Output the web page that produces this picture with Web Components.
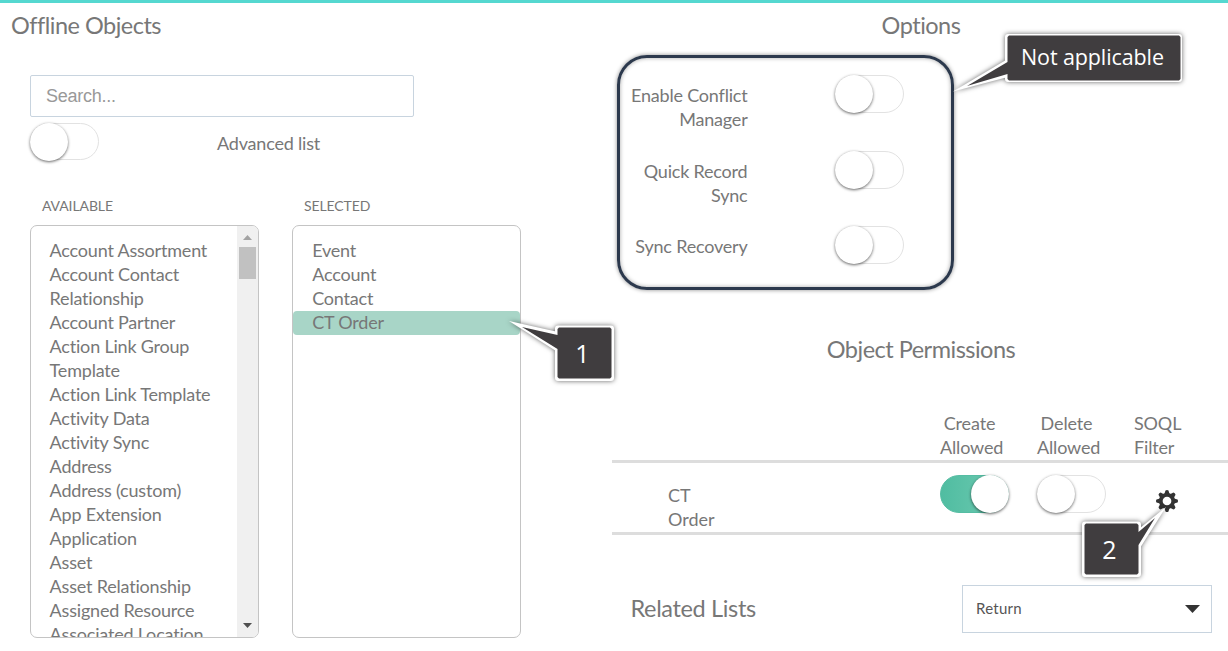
<!DOCTYPE html>
<html lang="en">
<head>
<meta charset="utf-8">
<title>Offline Objects</title>
<style>
html,body{margin:0;height:100%;overflow:hidden;background:#fff}
body{font:18px/24px Lato,"Liberation Sans",sans-serif;letter-spacing:-.2px;color:#777}
</style>
</head>
<body>
<offline-page></offline-page>
<script>
function define(name, html, setup) {
  const template = document.createElement('template');
  template.innerHTML = html;
  customElements.define(name, class extends HTMLElement {
    constructor() {
      super();
      this.attachShadow({ mode: 'open' }).append(template.content.cloneNode(true));
    }
    connectedCallback() { if (setup) setup(this, this.shadowRoot); }
  });
}

define('section-title', `<style>
:host{display:block;font-size:23.500px;line-height:30px;letter-spacing:-.5px;white-space:nowrap}
</style><slot></slot>`);

define('toggle-switch', `<style>
:host{display:block;box-sizing:border-box;width:69px;height:38px;border:1px solid #e2e2e2;border-radius:19px;background:#fff;flex:none}
:host([on]){border-color:#56bda3;background:linear-gradient(90deg,#50bda1,#70cab2)}
i{display:block;width:38px;height:38px;margin:-1px;border-radius:50%;background:#fff;box-shadow:0 1px 3px rgba(0,0,0,.6)}
:host([on]) i{margin-left:30px}
</style><i></i>`);

define('search-field', `<style>
:host{display:block}
input{display:block;box-sizing:border-box;width:100%;height:42px;border:1px solid #c8d4df;border-radius:2px;padding:0 15px;font:18px "Liberation Sans",Arial,sans-serif;letter-spacing:-.25px;color:#777;outline:0;background:#fff}
input::placeholder{color:#999;opacity:1}
</style><input placeholder="Search...">`);

define('object-item', `<style>
:host{display:block;padding:0 19px;height:24px;line-height:24px}
:host([tall]){height:48px}
:host([selected]){background:#a8d5c7;border-radius:4px}
div{margin:0 -4px 0 var(--nudge,-.4px);transform:translateY(-1px)}
</style><div><slot></slot></div>`);

define('scroll-track', `<style>
:host{display:flex;flex-direction:column;align-items:center;width:21px;background:#f0f0f0;flex:none}
svg{display:block;flex:none}
b{display:block;width:17px;height:32px;background:#c1c1c1;flex:none}
span{flex:1}
</style>
<svg width="21" height="21"><path d="M6 14h9l-4.500-5z" fill="#a3a3a3"/></svg><b></b><span></span>
<svg width="21" height="21"><path d="M6 7h9l-4.500 5z" fill="#505050"/></svg>`);

define('object-list', `<style>
:host{display:block;width:229px}
h3{margin:0 0 7px 12px;font-weight:400;font-size:14px;line-height:24px;letter-spacing:-.1px}
.box{box-sizing:border-box;display:flex;height:413px;border:1px solid #c4c4c4;border-radius:7px;overflow:hidden}
.items{flex:1;min-width:0;padding-top:13px;overflow:hidden}
scroll-track{display:none}
:host([scrollable]) scroll-track{display:flex}
:host(:not([scrollable])){--nudge:.2px}
</style><h3></h3><div class="box"><div class="items"><slot></slot></div><scroll-track></scroll-track></div>`,
(el, root) => { root.querySelector('h3').textContent = el.getAttribute('label'); });

define('option-row', `<style>
:host{display:flex;height:75.500px}
div{width:135.500px;padding-top:8px;text-align:right;line-height:24px}
toggle-switch{margin-left:87.500px}
</style><div><slot></slot></div><toggle-switch></toggle-switch>`);

define('gear-icon', `<style>:host{display:block;width:22px;height:22px}svg{display:block}</style>
<svg width="22" height="22" viewBox="-11 -11 22 22"><g fill="#333"></g><circle r="6.200" fill="none" stroke="#333" stroke-width="3.700"/></svg>`,
(el, root) => {
  const g = root.querySelector('g');
  for (let a = 0; a < 360; a += 45) {
    const tooth = document.createElementNS('http://www.w3.org/2000/svg', 'path');
    tooth.setAttribute('d', 'M-2.600-7L-1.500-10.500Q0-11.500 1.500-10.500L2.600-7z');
    tooth.setAttribute('transform', 'rotate(' + a + ')');
    g.append(tooth);
  }
});

define('permission-table', `<style>
:host{display:grid;grid-template-columns:328px 97px 97px 94px;border-bottom:3px solid #ddd;letter-spacing:-.15px}
.head{height:49px;border-bottom:3px solid #ddd}
.mid{width:63px;text-align:center}
.mid span{position:relative;left:-2px}
.name{height:49px;padding:20px 0 0 56px;width:50px;letter-spacing:0}
toggle-switch{margin-top:12px}
gear-icon{margin:27px 0 0 21.500px}
</style>
<div class="head"></div><div class="head"><div class="mid"><span>Create</span> Allowed</div></div><div class="head"><div class="mid"><span>Delete</span> Allowed</div></div><div class="head">SOQL<br>Filter</div>
<div class="name">CT Order</div><toggle-switch on></toggle-switch><toggle-switch></toggle-switch><gear-icon></gear-icon>`);

define('select-box', `<style>
:host{box-sizing:border-box;display:flex;align-items:center;justify-content:space-between;width:250px;height:48px;border:1px solid #c8d4df;padding:0 11px 0 13px;font-size:15px;letter-spacing:.25px;color:#555}
svg{display:block}
span{padding-bottom:2px}
</style><span><slot></slot></span><svg width="15" height="8"><path d="M0 0h15L7.500 8z" fill="#333"/></svg>`);

/* Annotation bubble: body, tail and dark shape are given in page coordinates. */
define('callout-bubble', `<style>
:host{position:absolute;left:0;top:0;width:1228px;height:651px;pointer-events:none}
svg{display:block;overflow:visible}
g{fill:#fff;filter:drop-shadow(0 0 2.500px rgba(0,0,0,.6))}
.body{stroke:#fff;stroke-width:6;stroke-linejoin:round}
.inner{fill:#403d3f}
text{fill:#fff;font-family:"Open Sans","Noto Sans",sans-serif;text-anchor:middle;letter-spacing:0}
</style><svg width="1228" height="651"><g><path class="body"/><path class="tail"/></g><path class="inner"/><text></text></svg>`,
(el, root) => {
  const get = n => el.getAttribute(n);
  root.querySelector('.body').setAttribute('d', get('body'));
  root.querySelector('.tail').setAttribute('d', get('tail'));
  root.querySelector('.inner').setAttribute('d', get('shape'));
  const t = root.querySelector('text');
  t.setAttribute('x', get('tx'));
  t.setAttribute('y', get('ty'));
  t.setAttribute('font-size', get('size'));
  if (get('length')) t.setAttribute('textLength', get('length'));
  t.textContent = get('label');
});

define('highlight-frame', `<style>
:host{position:absolute;box-sizing:border-box;left:617px;top:55px;width:337px;height:235px;border:3px solid #2c394d;border-radius:30px;box-shadow:0 0 4px rgba(0,0,0,.45),inset 0 0 4px rgba(0,0,0,.35);pointer-events:none}
</style>`);

define('offline-page', `<style>
:host{display:flex;box-sizing:border-box;width:1228px;height:651px;border-top:3px solid #55d8d0;position:relative;overflow:hidden}
.left{width:612px;flex:none;padding-top:7px}
.left section-title{margin-left:11px}
.body{margin:35px 0 0 30px}
search-field{width:384px}
.adv{display:flex;margin-top:6px;height:38px}
.adv toggle-switch{height:37px;margin-left:-.500px}
.adv span{margin:8px 0 0 118.500px}
.lists{display:flex;gap:33px;margin-top:33px}
.right{width:616px;flex:none;padding-top:7px}
.center{text-align:center;padding-left:2px}
.options{margin-top:35px;height:226px}
.perm{margin-top:33px}
permission-table{margin-top:47px}
.related{display:flex;justify-content:space-between;align-items:center;margin:50px 16px 0 18.500px}
.related section-title{padding-bottom:2px;letter-spacing:-.35px}
.layer{position:absolute;left:0;top:-3px}
</style>
<div class="left">
<section-title>Offline Objects</section-title>
<div class="body">
<search-field></search-field>
<div class="adv"><toggle-switch></toggle-switch><span>Advanced list</span></div>
<div class="lists">
<object-list label="AVAILABLE" scrollable>
<object-item>Account Assortment</object-item><object-item tall>Account Contact<br>Relationship</object-item><object-item>Account Partner</object-item><object-item tall>Action Link Group<br>Template</object-item><object-item>Action Link Template</object-item><object-item>Activity Data</object-item><object-item>Activity Sync</object-item><object-item>Address</object-item><object-item>Address (custom)</object-item><object-item>App Extension</object-item><object-item>Application</object-item><object-item>Asset</object-item><object-item>Asset Relationship</object-item><object-item>Assigned Resource</object-item><object-item>Associated Location</object-item>
</object-list>
<object-list label="SELECTED">
<object-item>Event</object-item><object-item>Account</object-item><object-item>Contact</object-item><object-item selected>CT Order</object-item>
</object-list>
</div></div></div>
<div class="right">
<section-title class="center">Options</section-title>
<div class="options">
<option-row>Enable Conflict Manager</option-row><option-row>Quick Record<br>Sync</option-row><option-row>Sync Recovery</option-row>
</div>
<section-title class="center perm">Object Permissions</section-title>
<permission-table></permission-table>
<div class="related"><section-title>Related Lists</section-title><select-box>Return</select-box></div>
</div>
<div class="layer">
<highlight-frame></highlight-frame>
<callout-bubble label="Not applicable" tx="1092.500" ty="65" size="21.500" length="143"
 body="M1008 37H1179V79H1008Z" tail="M1006 60L953 91.500L1006 77.500Z" shape="M1009 35.500H1179L1180.500 37V79L1179 80.500H1009L1007.500 79V74L967 86L1007.500 62V37Z"></callout-bubble>
<callout-bubble label="1" tx="582.500" ty="363" size="25"
 body="M558 328.500H611V378H558Z" tail="M556 331.500L509 321L556 351Z" shape="M559 327.500H610L611.500 329V377L610 378.500H559L557.500 377V349L522 327L557.500 335V329Z"></callout-bubble>
<callout-bubble label="2" tx="1109.500" ty="559" size="25"
 body="M1085 524.500H1138V574H1085Z" tail="M1140 528L1166 507L1140 548Z" shape="M1086 523.500H1137L1138.500 525V532L1155 518L1138.500 545V573L1137 574.500H1086L1084.500 573V525Z"></callout-bubble>
</div>`);
</script>
</body>
</html>
